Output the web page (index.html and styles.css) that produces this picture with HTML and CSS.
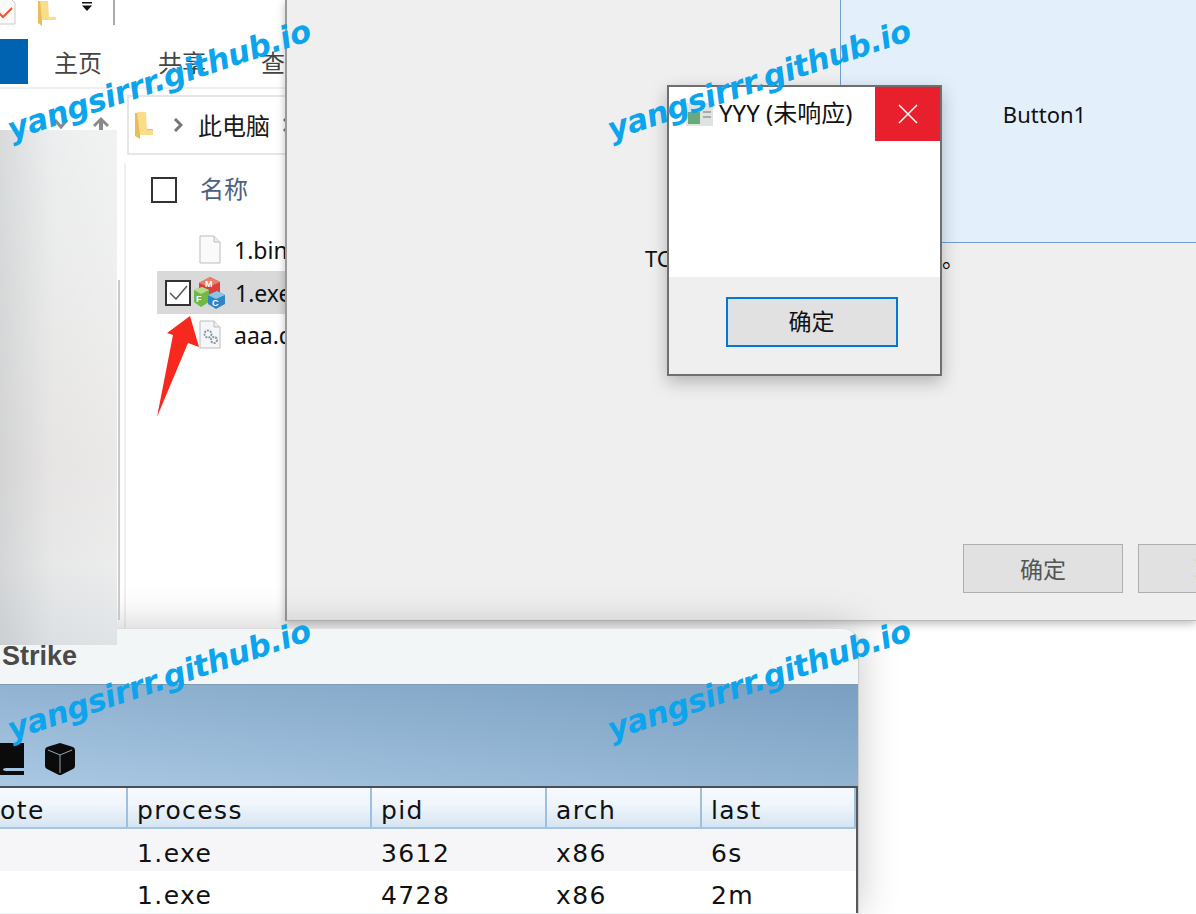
FILE: index.html
```html
<!DOCTYPE html>
<html lang="zh-CN">
<head>
  <meta charset="UTF-8">
  <title>yangsirrr.github.io</title>
  <link rel="stylesheet" href="styles.css">
</head>
<body>
  <!-- explorer window, cut off on the left -->
  <div class="explorer">
    <div class="quickbar">
      <svg class="doc-check" width="16" height="25" viewBox="0 0 16 25"><path d="M-4 -2H10L15 3V24H-4Z" fill="#fafafa" stroke="#ccc"/><path d="M-2 12L3 17L12 8" fill="none" stroke="#f0532b" stroke-width="2"/></svg>
      <svg class="folder-small" width="19" height="26" viewBox="0 0 19 26"><path d="M0 1H10V17H18V20H4V26L0 23Z" fill="#e8bd5c"/><path d="M2 1H10L11 17H18V20H4Z" fill="#fbdc8a"/></svg>
      <svg class="drop" width="12" height="10" viewBox="0 0 12 10"><path d="M1 0H11V1.500H1ZM1 3.500H11L6 9Z" fill="#111"/></svg>
      <span class="quick-sep"></span>
    </div>
    <div class="ribbon">
      <span class="file-tab"></span>
      <span class="ribbon-tab tab-home">主页</span>
      <span class="ribbon-tab tab-share">共享</span>
      <span class="ribbon-tab">查看</span>
    </div>
    <div class="addr-row">
      <div class="nav-arrows">
        <svg width="14" height="10" viewBox="0 0 14 10"><path d="M1 1L7 8L13 1" fill="none" stroke="#8a8a8a" stroke-width="3"/></svg>
        <svg width="18" height="16" viewBox="0 0 18 16"><path d="M9 1L1 9L3 11L7 7V15H11V7L15 11L17 9Z" fill="#8a8a8a"/></svg>
      </div>
      <div class="addr-box">
        <svg class="addr-folder" width="18" height="27" viewBox="0 0 18 27"><path d="M0 1H11V17H18V23H5V27L0 24Z" fill="#e8bd5c"/><path d="M2 0H11L12 18H18V23H5Z" fill="#fbdc8a"/></svg>
        <svg class="chev" width="10" height="14" viewBox="0 0 10 14"><path d="M2 1L8 7L2 13" fill="none" stroke="#777" stroke-width="3"/></svg>
        <span class="crumb">此电脑</span>
        <svg class="chev chev-end" width="10" height="14" viewBox="0 0 10 14"><path d="M2 1L8 7L2 13" fill="none" stroke="#777" stroke-width="3"/></svg>
      </div>
    </div>
    <div class="browser">
      <div class="nav-pane"></div>
      <div class="file-pane">
        <div class="file-head">
          <span class="check"></span>
          <span class="col-name">名称</span>
        </div>
        <div class="file-row">
          <svg class="file-icon" width="22" height="29" viewBox="0 0 22 29"><path d="M1 1H15L21 7V28H1Z" fill="#fafafa" stroke="#bdbdbd"/><path d="M15 1V7H21" fill="#eee" stroke="#bdbdbd"/></svg>
          <span>1.bin</span>
        </div>
        <div class="file-row is-selected">
          <span class="check check-on">
            <svg width="19" height="15" viewBox="0 0 19 15"><path d="M1 8L7 14L18 1" fill="none" stroke="#555" stroke-width="1.500"/></svg>
          </span>
          <svg class="exe-icon" width="32" height="32" viewBox="0 0 32 32">
            <path d="M5 6L16 0L26 5V15L15 21L5 15Z" fill="#d9423c"/>
            <path d="M5 6L16 0L26 5L15 10Z" fill="#e9806e"/>
            <path d="M0 13L8 10L15 13V25L7 30L0 25Z" fill="#71b844"/>
            <path d="M0 13L8 10L15 13L7 17Z" fill="#b5dc8c"/>
            <path d="M14 18L23 14L31 18V27L22 32L14 27Z" fill="#2f86c6"/>
            <path d="M14 18L23 14L31 18L22 22Z" fill="#8cc4e8"/>
            <text x="11" y="10" class="cube-text">M</text>
            <text x="2" y="25" class="cube-text">F</text>
            <text x="18" y="29" class="cube-text">C</text>
          </svg>
          <span>1.exe</span>
        </div>
        <div class="file-row">
          <svg class="file-icon" width="22" height="29" viewBox="0 0 22 29"><path d="M1 1H15L21 7V28H1Z" fill="#f4f6f8" stroke="#bdbdbd"/><path d="M15 1V7H21" fill="#eee" stroke="#bdbdbd"/><circle cx="9" cy="14" r="3.500" fill="none" stroke="#8d99a6" stroke-width="2" stroke-dasharray="2 1"/><circle cx="15" cy="20" r="3" fill="none" stroke="#8d99a6" stroke-width="2" stroke-dasharray="2 1"/></svg>
          <span>aaa.dll</span>
        </div>
      </div>
    </div>
  </div>

  <!-- smudge that hides the sidebar -->
  <div class="smudge"></div>
  <div class="smudge-edge"></div>

  <!-- setup window behind the dialog -->
  <div class="main-win">
    <div class="main-top">
      <div class="big-btn">Button1</div>
    </div>
    <div class="main-mid">
      <span class="mid-text">TC</span>
      <span class="mid-dot">。</span>
    </div>
    <div class="main-foot">
      <span class="plain-btn">确定</span>
      <span class="plain-btn">取消</span>
    </div>
  </div>

  <!-- message box -->
  <div class="dialog">
    <div class="dlg-title">
      <svg class="dlg-icon" width="27" height="23" viewBox="0 0 27 23"><rect x="0" y="0" width="27" height="23" fill="#dfe4e1"/><rect x="2" y="9" width="12" height="12" fill="#6aa97c"/><rect x="17" y="8" width="8" height="2" fill="#aaa"/><rect x="17" y="13" width="8" height="2" fill="#aaa"/></svg>
      <span class="dlg-name">YYY (未响应)</span>
      <span class="dlg-close">
        <svg width="20" height="20" viewBox="0 0 20 20"><path d="M1 1L19 19M19 1L1 19" stroke="#fff" stroke-width="1.500"/></svg>
      </span>
    </div>
    <div class="dlg-body"></div>
    <div class="dlg-foot">
      <span class="dlg-ok">确定</span>
    </div>
  </div>

  <!-- teamserver client -->
  <div class="cs-win">
    <div class="cs-title">Strike</div>
    <div class="cs-toolbar">
      <svg width="24" height="32" viewBox="0 0 24 32"><path d="M0 0H24V25H6C2 25 2 28 6 28H24V32H0Z" fill="#0b0b0b"/></svg>
      <svg class="cube" width="32" height="32" viewBox="0 0 32 32"><path d="M16 0L29 4Q31 5 31 7V23Q31 25 29 26L17 32H15L3 26Q1 25 1 23V7Q1 5 3 4Z" fill="#0b0b0b"/><path d="M4 7L16 12L28 7M16 12V30" fill="none" stroke="#8fa7bb" stroke-width="1"/></svg>
    </div>
    <div class="cs-table">
      <div class="cs-row cs-head">
        <span>ote</span><span>process</span><span>pid</span><span>arch</span><span>last</span>
      </div>
      <div class="cs-row cs-odd">
        <span></span><span>1.exe</span><span>3612</span><span>x86</span><span>6s</span>
      </div>
      <div class="cs-row">
        <span></span><span>1.exe</span><span>4728</span><span>x86</span><span>2m</span>
      </div>
    </div>
  </div>

  <!-- red arrow drawn on top -->
  <svg class="red-arrow" width="50" height="110" viewBox="150 312 50 110"><path d="M190 316L199 347L188 343L157 417L173 335L167 333Z" fill="#f7281e"/></svg>

  <span class="mark mark-a">yangsirrr.github.io</span>
  <span class="mark mark-b">yangsirrr.github.io</span>
  <span class="mark mark-c">yangsirrr.github.io</span>
  <span class="mark mark-d">yangsirrr.github.io</span>
</body>
</html>
```

FILE: styles.css
```css
* {
  box-sizing: border-box;
}

html, body {
  margin: 0;
  width: 1196px;
  height: 914px;
  overflow: hidden;
  background: #ffffff;
  font-family: 'Noto Sans', 'Noto Sans CJK SC', sans-serif;
  color: #111;
}

/* explorer */
.explorer {
  position: absolute;
  left: 0;
  top: 0;
  width: 286px;
  height: 628px;
  background: #fff;
  overflow: hidden;
}

.quickbar {
  display: flex;
  align-items: center;
  height: 25px;
}

.folder-small {
  margin-left: 22px;
}

.drop {
  margin-left: 24px;
  margin-top: -12px;
}

.quick-sep {
  width: 2px;
  height: 25px;
  background: #aaa;
  margin-left: 20px;
}

.ribbon {
  display: flex;
  align-items: center;
  height: 50px;
  margin-top: 14px;
  border-bottom: 2px solid #efefef;
  padding-bottom: 3px;
}

.file-tab {
  flex: none;
  width: 28px;
  height: 45px;
  background: #0063b1;
}

.ribbon-tab {
  flex: none;
  font-size: 24px;
  line-height: 1;
  margin-top: 3px;
  color: #444;
  white-space: nowrap;
}

.tab-home {
  margin-left: 26px;
}

.tab-share {
  margin-left: 56px;
  margin-right: 55px;
}

.addr-row {
  display: flex;
  height: 66px;
  padding-top: 6px;
}

.nav-arrows {
  flex: none;
  display: flex;
  align-items: center;
  gap: 24px;
  width: 127px;
  padding-left: 54px;
  height: 58px;
}

.addr-box {
  flex: none;
  display: flex;
  align-items: center;
  width: 200px;
  height: 60px;
  padding-left: 6px;
  border: 2px solid #e6e6e6;
  font-size: 24px;
}

.addr-folder {
  flex: none;
}

.chev {
  flex: none;
  margin-left: 20px;
}

.chev-end {
  margin-left: 12px;
}

.crumb {
  flex: none;
  margin-left: 15px;
  margin-top: 2px;
  color: #1a1a1a;
  line-height: 1;
}

.browser {
  display: flex;
  height: 473px;
}

.nav-pane {
  flex: none;
  width: 126px;
  margin-top: 8px;
  border-right: 2px solid #f0f0f0;
}

.file-pane {
  flex: 1;
  padding-top: 22px;
  padding-left: 25px;
}

.file-head {
  display: flex;
  align-items: center;
  height: 25px;
  margin-bottom: 27px;
}

.check {
  display: inline-flex;
  align-items: center;
  justify-content: center;
  width: 26px;
  height: 26px;
  border: 2px solid #333;
  flex: none;
}

.col-name {
  margin-left: 23px;
  margin-top: -1px;
  font-size: 24px;
  line-height: 1;
  color: #4c6180;
}

.file-row {
  display: flex;
  align-items: center;
  height: 43px;
  font-size: 23px;
  color: #111;
  white-space: nowrap;
  padding-left: 48px;
  margin-right: -40px;
  margin-top: -1px;
}

.file-row .file-icon {
  margin-right: 13px;
  flex: none;
}

.file-row.is-selected {
  background: #d9d9d9;
  padding-left: 8px;
  margin-left: 6px;
  margin-top: 0;
}

.check-on {
  background: #fff;
}

.exe-icon {
  flex: none;
  margin-left: 3px;
  margin-right: 9px;
}

.cube-text {
  font-family: 'Liberation Sans', sans-serif;
  font-size: 9px;
  font-weight: bold;
  fill: #fff;
}

.smudge {
  position: absolute;
  left: 0;
  top: 130px;
  width: 117px;
  height: 515px;
  z-index: 5;
  background:
    linear-gradient(90deg, rgba(150,155,160,0.28) 0%, rgba(150,155,160,0.05) 45%, rgba(255,255,255,0) 100%),
    linear-gradient(180deg, #f1f3f3 0%, #ededec 40%, #ebe9e8 65%, #ebecec 85%, #dfe3e6 100%);
}

.smudge-edge {
  position: absolute;
  left: 118px;
  top: 280px;
  width: 2px;
  height: 340px;
  background: #c9c9c9;
  z-index: 5;
}

/* main window */
.main-win {
  position: absolute;
  left: 285px;
  top: 0;
  width: 911px;
  height: 621px;
  background: #efefef;
  border-left: 2px solid #9a9a9a;
  border-bottom: 1px solid #bbb;
  box-shadow: 0 3px 8px rgba(0,0,0,0.25);
  display: flex;
  flex-direction: column;
  z-index: 1;
}

.main-top {
  height: 243px;
  display: flex;
  justify-content: flex-end;
}

.big-btn {
  width: 356px;
  padding: 0 0 14px 52px;
  background: #e3f0fb;
  border-left: 1px solid #6f9fd3;
  border-bottom: 1px solid #6f9fd3;
  display: flex;
  align-items: center;
  justify-content: center;
  font-size: 22px;
  color: #111;
}

.main-mid {
  position: relative;
  flex: 1;
  font-size: 22px;
}

.mid-text {
  position: absolute;
  left: 358px;
  top: 0;
}

.mid-dot {
  position: absolute;
  left: 655px;
  top: -2px;
}

.main-foot {
  display: flex;
  gap: 15px;
  padding: 0 0 27px 676px;
  overflow: hidden;
}

.plain-btn {
  flex: none;
  width: 160px;
  height: 49px;
  padding-bottom: 2px;
  background: #e1e1e1;
  border: 1px solid #aeaeae;
  display: flex;
  align-items: center;
  justify-content: center;
  font-size: 23px;
  color: #555;
}

/* dialog */
.dialog {
  position: absolute;
  left: 667px;
  top: 85px;
  width: 275px;
  height: 291px;
  z-index: 3;
  display: flex;
  flex-direction: column;
  border: 2px solid #6f6f6f;
  background: #fff;
  box-shadow: 0 6px 16px rgba(0,0,0,0.25);
}

.dlg-title {
  position: relative;
  display: flex;
  align-items: center;
  height: 54px;
  flex: none;
  padding-left: 17px;
}

.dlg-icon {
  margin-right: 6px;
}

.dlg-name {
  font-size: 24px;
  line-height: 1;
  margin-top: -2px;
  white-space: nowrap;
}

.dlg-close {
  position: absolute;
  right: 0;
  top: 0;
  width: 65px;
  height: 54px;
  background: #e81f2c;
  display: flex;
  align-items: center;
  justify-content: center;
}

.dlg-body {
  flex: 1;
}

.dlg-foot {
  height: 97px;
  background: #efefef;
  display: flex;
  align-items: flex-start;
  justify-content: center;
  padding-top: 20px;
  padding-left: 14px;
}

.dlg-ok {
  width: 172px;
  height: 50px;
  background: #e1e1e1;
  border: 2px solid #0078d7;
  display: flex;
  align-items: center;
  justify-content: center;
  font-size: 23px;
  line-height: 1;
  padding-bottom: 2px;
  color: #111;
}

/* bottom window */
.cs-win {
  position: absolute;
  left: 0;
  top: 628px;
  width: 859px;
  height: 286px;
  z-index: 2;
  background: #f3f6f6;
  border-top-right-radius: 16px;
  box-shadow: 0 0 40px rgba(0,0,0,0.22);
  overflow: hidden;
  border-top: 1px solid #ddd;
  border-right: 1px solid #ccc;
}

.cs-title {
  height: 55px;
  padding: 11px 0 0 2px;
  font-family: 'Liberation Sans', sans-serif;
  font-weight: bold;
  font-size: 27px;
  line-height: 32px;
  color: #4a4a4a;
}

.cs-toolbar {
  display: flex;
  align-items: flex-end;
  gap: 20px;
  height: 102px;
  padding-bottom: 11px;
  background: linear-gradient(to bottom left, #7a9fc1 0%, #a9c8e3 100%);
  border-top: 1px solid #7f9bb4;
}

.cs-table {
  border-top: 2px solid #4a4f55;
  border-right: 2px solid #55585c;
  background: #fff;
  font-family: 'DejaVu Sans', sans-serif;
  font-size: 25px;
  letter-spacing: 1.4px;
  color: #111;
}

.cs-row {
  display: grid;
  grid-template-columns: 128px 244px 175px 155px 1fr;
  height: 42px;
  padding-top: 7px;
  align-items: center;
}

.cs-row span {
  padding-left: 9px;
  white-space: nowrap;
}

.cs-row span:first-child {
  padding-left: 0;
}

.cs-head {
  height: 41px;
  padding-top: 0;
  align-items: stretch;
  background: linear-gradient(180deg, #f6faff 0%, #f0f6fc 40%, #d6e5f3 100%);
  border-bottom: 2px solid #a4c6e4;
}

.cs-head span {
  display: flex;
  align-items: center;
  padding-top: 6px;
  border-right: 2px solid #9dc0de;
}

.cs-odd {
  background: #f6f6f9;
}

.red-arrow {
  position: absolute;
  left: 150px;
  top: 312px;
  z-index: 6;
}

/* watermark */
.mark {
  position: absolute;
  z-index: 10;
  font-family: 'DejaVu Sans', sans-serif;
  font-weight: bold;
  font-style: italic;
  font-size: 31px;
  letter-spacing: -0.4px;
  color: #0ca4ec;
  white-space: nowrap;
  transform: rotate(-18.5deg);
  transform-origin: left bottom;
}

.mark-a {
  left: 14px;
  top: 111px;
}

.mark-b {
  left: 614px;
  top: 111px;
}

.mark-c {
  left: 14px;
  top: 711px;
}

.mark-d {
  left: 614px;
  top: 711px;
}
```
